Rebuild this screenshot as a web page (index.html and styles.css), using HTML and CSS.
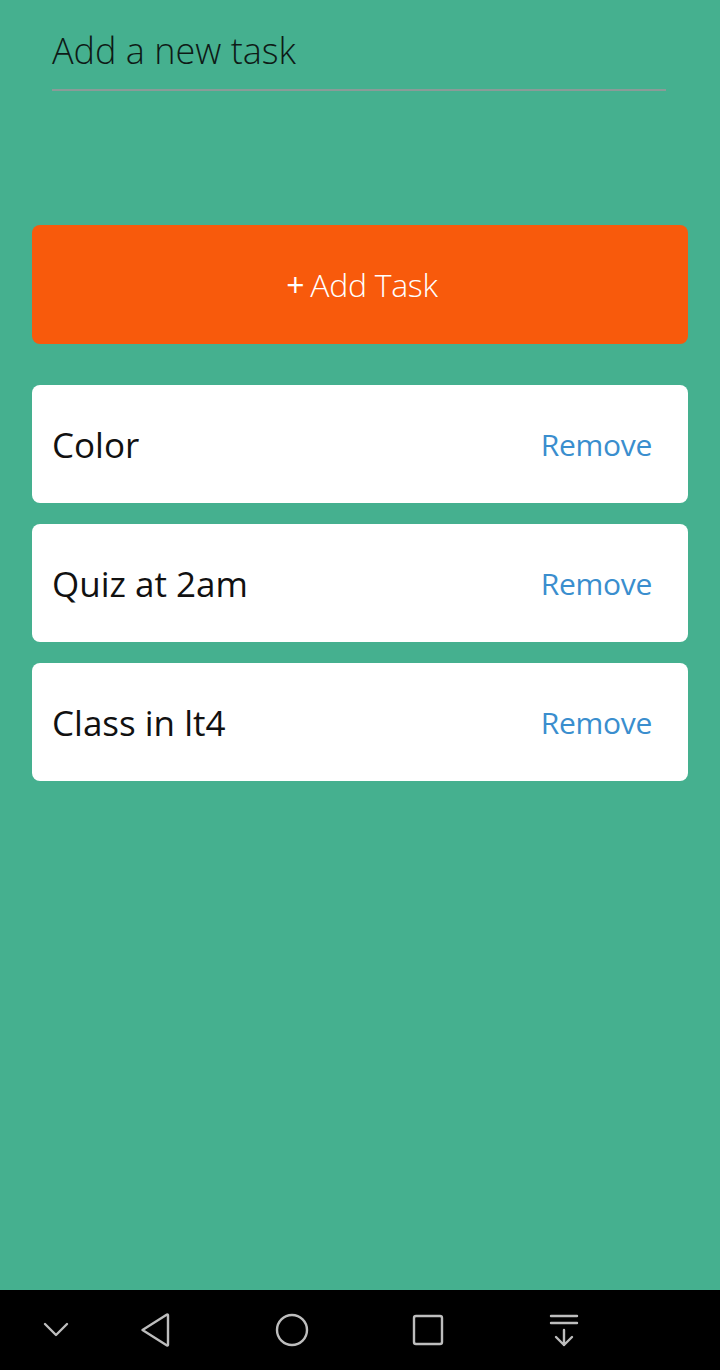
FILE: index.html
```html
<!DOCTYPE html>
<html>
<head>
<meta charset="utf-8">
<link rel="stylesheet" href="styles.css">
</head>
<body>
<div class="screen">
  <main class="content">
    <div class="input-wrap">
      <div class="input">Add a new task</div>
    </div>
    <button class="add-btn"><span class="plus">+</span>Add Task</button>
    <ul class="tasks">
      <li class="task"><span class="task-name">Color</span><span class="remove">Remove</span></li>
      <li class="task"><span class="task-name">Quiz at 2am</span><span class="remove">Remove</span></li>
      <li class="task"><span class="task-name">Class in lt4</span><span class="remove">Remove</span></li>
    </ul>
  </main>
  <nav class="navbar">
    <span class="nav-item nav-hide">
      <svg width="40" height="40" viewBox="0 0 40 40"><path d="M9 14 L20 25 L31 14" fill="none" stroke="#bdbdbd" stroke-width="2.4" stroke-linecap="round" stroke-linejoin="round"/></svg>
    </span>
    <span class="nav-item nav-back">
      <svg width="40" height="40" viewBox="0 0 40 40"><path d="M7.5 20 L32 4.5 Q33 4 33 5.5 L33 34.5 Q33 36 32 35.5 Z" fill="none" stroke="#bdbdbd" stroke-width="2.4" stroke-linejoin="round"/></svg>
    </span>
    <span class="nav-item">
      <svg width="40" height="40" viewBox="0 0 40 40"><circle cx="20" cy="20" r="15" fill="none" stroke="#bdbdbd" stroke-width="2.4"/></svg>
    </span>
    <span class="nav-item">
      <svg width="40" height="40" viewBox="0 0 40 40"><rect x="6" y="6" width="28" height="28" rx="2" fill="none" stroke="#bdbdbd" stroke-width="2.4"/></svg>
    </span>
    <span class="nav-item">
      <svg width="40" height="40" viewBox="0 0 40 40"><path d="M7 6 H33 M7 13 H33 M20 20 V35 M12 27 L20 35 L28 27" fill="none" stroke="#bdbdbd" stroke-width="2.4" stroke-linecap="round" stroke-linejoin="round"/></svg>
    </span>
  </nav>
</div>
</body>
</html>
```
FILE: styles.css
```css
* { box-sizing: border-box; }
html, body {
  margin: 0;
  padding: 0;
  height: 100%;
}
body {
  font-family: "Open Sans", "Noto Sans", sans-serif;
  background: #45b08f;
}
.screen {
  height: 100vh;
  display: flex;
  flex-direction: column;
}
.content {
  flex: 1;
  padding: 0 32px;
}
.input-wrap {
  padding: 0 22px 0 20px;
}
.input {
  height: 91px;
  border-bottom: 2px solid #8a9b98;
  font-size: 36px;
  font-weight: 300;
  color: #0e1a16;
  padding-top: 33px;
  line-height: 1;
  letter-spacing: 0;
}
.add-btn {
  display: flex;
  align-items: center;
  justify-content: center;
  width: 100%;
  height: 119px;
  margin-top: 134px;
  border: none;
  border-radius: 8px;
  background: #f85a0c;
  color: #fff;
  font-family: inherit;
  font-size: 32px;
  font-weight: 300;
  letter-spacing: -0.3px;
  padding: 0 0 0 4px;
}
.plus {
  font-weight: 400;
  margin-right: 6px;
}
.tasks {
  list-style: none;
  margin: 41px 0 0;
  padding: 0;
  display: flex;
  flex-direction: column;
  gap: 21px;
}
.task {
  height: 118px;
  background: #fff;
  border-radius: 8px;
  display: flex;
  align-items: center;
  justify-content: space-between;
  padding: 0 36px 0 20px;
}
.task-name {
  font-size: 35px;
  font-weight: 400;
  color: #111;
  letter-spacing: 0;
}
.remove {
  font-size: 30px;
  font-weight: 400;
  color: #3a8ece;
  letter-spacing: -0.3px;
}
.navbar {
  height: 80px;
  background: #000;
  display: flex;
  align-items: center;
  padding-left: 36px;
  gap: 96px;
}
.nav-item {
  width: 40px;
  height: 40px;
  display: flex;
}
.nav-hide { margin-right: -37px; }
.nav-back { margin-right: 1px; }
```
